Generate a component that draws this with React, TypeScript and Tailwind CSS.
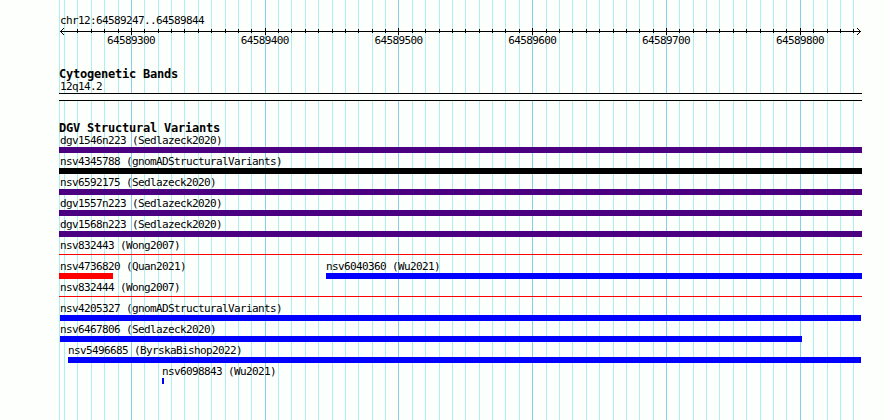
const ORIGIN = 59;
const WIDTH = 803;

const MINOR = [
  64, 77, 91, 104, 118, 144, 158, 171, 184, 198, 211, 225, 238, 251, 278, 291,
  305, 318, 332, 345, 358, 372, 385, 412, 425, 439, 452, 465, 479, 492, 505,
  519, 546, 559, 572, 586, 599, 613, 626, 639, 653, 679, 693, 706, 719, 733,
  746, 760, 773, 786, 813, 827, 840, 853,
];

const MAJOR = [
  { x: 131, label: "64589300" },
  { x: 265, label: "64589400" },
  { x: 398, label: "64589500" },
  { x: 532, label: "64589600" },
  { x: 666, label: "64589700" },
  { x: 800, label: "64589800" },
];

type Feature = {
  name: string;
  start: number;
  end: number;
  color: string;
  thin?: boolean;
};

const INDIGO = "bg-[#4b0082]";
const BLUE = "bg-[#0000ff]";
const RED = "bg-[#ff0000]";

const ROWS: Feature[][] = [
  [{ name: "dgv1546n223 (Sedlazeck2020)", start: 59, end: 862, color: INDIGO }],
  [{ name: "nsv4345788 (gnomADStructuralVariants)", start: 59, end: 862, color: "bg-black" }],
  [{ name: "nsv6592175 (Sedlazeck2020)", start: 59, end: 862, color: INDIGO }],
  [{ name: "dgv1557n223 (Sedlazeck2020)", start: 59, end: 862, color: INDIGO }],
  [{ name: "dgv1568n223 (Sedlazeck2020)", start: 59, end: 862, color: INDIGO }],
  [{ name: "nsv832443 (Wong2007)", start: 59, end: 862, color: RED, thin: true }],
  [
    { name: "nsv4736820 (Quan2021)", start: 59, end: 113, color: RED },
    { name: "nsv6040360 (Wu2021)", start: 326, end: 862, color: BLUE },
  ],
  [{ name: "nsv832444 (Wong2007)", start: 59, end: 862, color: RED, thin: true }],
  [{ name: "nsv4205327 (gnomADStructuralVariants)", start: 60, end: 861, color: BLUE }],
  [{ name: "nsv6467806 (Sedlazeck2020)", start: 60, end: 802, color: BLUE }],
  [{ name: "nsv5496685 (ByrskaBishop2022)", start: 68, end: 861, color: BLUE }],
  [{ name: "nsv6098843 (Wu2021)", start: 162, end: 164, color: BLUE }],
];

/** Vertical guide lines behind every track. */
function Guides() {
  return (
    <svg
      className="absolute inset-0"
      width="890"
      height="420"
      shapeRendering="crispEdges"
    >
      {[ORIGIN, ...MINOR].map((x) => (
        <rect key={x} x={x} y="0" width="1" height="420" fill="#afeeee" />
      ))}
      {MAJOR.map(({ x }) => (
        <rect key={x} x={x} y="0" width="1" height="420" fill="#87ceeb" />
      ))}
    </svg>
  );
}

/** Double-headed arrow with minor and major ticks. */
function Ruler() {
  return (
    <svg
      className="block"
      width="890"
      height="7"
      viewBox="0 28 890 7"
      shapeRendering="crispEdges"
    >
      <rect x="60" y="31" width="801" height="1" />
      {MINOR.slice(1).map((x) => (
        <rect key={x} x={x} y="29" width="1" height="4" />
      ))}
      {MAJOR.map(({ x }) => (
        <rect key={x} x={x} y="28" width="1" height="7" />
      ))}
      {[1, 2, 3].map((d) => (
        <g key={d}>
          <rect x={60 + d} y={31 - d} width="1" height="1" />
          <rect x={60 + d} y={31 + d} width="1" height="1" />
          <rect x={860 - d} y={31 - d} width="1" height="1" />
          <rect x={860 - d} y={31 + d} width="1" height="1" />
        </g>
      ))}
    </svg>
  );
}

function Row({ features }: { features: Feature[] }) {
  return (
    <div className="flex h-[21px]">
      {features.map((f, i) => {
        const previous = i === 0 ? ORIGIN : features[i - 1].end;
        return (
          <div
            key={f.name}
            className="shrink-0"
            style={{ marginLeft: f.start - previous, width: f.end - f.start }}
          >
            <div className={`h-[15px] leading-[18px] ${f.start === ORIGIN ? "pl-px" : ""}`}>
              {f.name}
            </div>
            <div className={f.thin ? `mt-0.5 h-px ${f.color}` : `h-1.5 ${f.color}`} />
          </div>
        );
      })}
    </div>
  );
}

export default function App() {
  return (
    <div className="relative h-[420px] w-[890px] overflow-hidden bg-[#fdfffc] font-['DejaVu_Sans_Mono',monospace] text-[11px] tracking-[-0.622px] whitespace-nowrap text-black">
      <Guides />
      <div className="relative">
        <div className="h-7 pt-[13px] pl-[60px] leading-4">
          chr12:64589247..64589844
        </div>
        <Ruler />
        <div className="grid h-[33px] grid-cols-[repeat(6,133.8px)] pl-16 leading-3">
          {MAJOR.map(({ label }) => (
            <span key={label} className="text-center">
              {label}
            </span>
          ))}
        </div>

        <section style={{ marginLeft: ORIGIN, width: WIDTH }}>
          <h2 className="h-3 text-[12px] leading-3 font-bold tracking-[-0.224px]">
            Cytogenetic Bands
          </h2>
          <div className="h-[13px] pl-px leading-[14px]">12q14.2</div>
          <div className="h-2 border-y border-black bg-[#fdfffc]" />
        </section>

        <section className="pt-[21px]" style={{ marginLeft: ORIGIN, width: WIDTH }}>
          <h2 className="h-[10px] text-[12px] leading-3 font-bold tracking-[-0.224px]">
            DGV Structural Variants
          </h2>
          {ROWS.map((features) => (
            <Row key={features[0].name} features={features} />
          ))}
        </section>
      </div>
    </div>
  );
}
